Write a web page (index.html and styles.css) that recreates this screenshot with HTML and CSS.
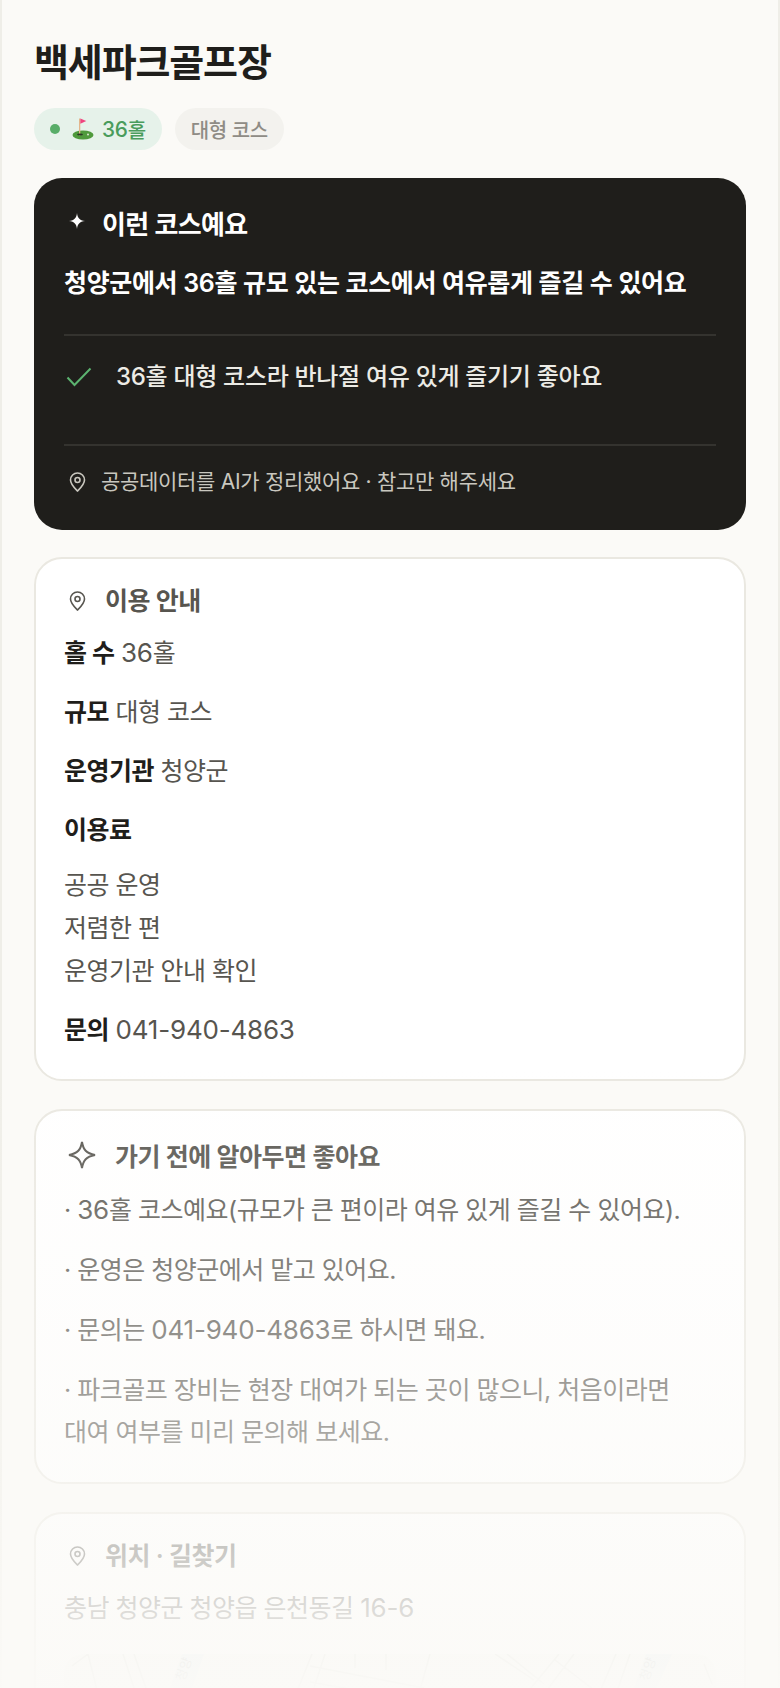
FILE: index.html
```html
<!DOCTYPE html>
<html lang="ko">
<head>
<meta charset="utf-8">
<title>백세파크골프장</title>
<link rel="stylesheet" href="styles.css">
</head>
<body>
<main class="page">
  <h1 class="title">백세파크골프장</h1>
  <div class="tags">
    <span class="tag tag-green"><i class="dot"></i><svg class="golf" viewBox="0 0 22 22"><ellipse cx="11" cy="17" rx="10.500" ry="4.500" fill="#4f9a3c"/><rect x="7" y="0.500" width="1.300" height="17" fill="#e3b68c"/><path d="M8.300 0.500l6 2.600-6 2.600z" fill="#f0447f"/><ellipse cx="8" cy="16.500" rx="3" ry="1" fill="#2b3a24"/><circle cx="16" cy="16.500" r="1" fill="#dfe8d6"/></svg><span class="num">36</span>홀</span>
    <span class="tag tag-gray">대형 코스</span>
  </div>
  <section class="hero">
    <h2 class="hero-head"><svg class="spark" viewBox="0 0 16 16"><path d="M8 0c.5 5 2.500 7.300 8 8-5.500.7-7.500 3-8 8-.5-5-2.500-7.300-8-8 5.500-.7 7.500-3 8-8z" fill="#fff"/></svg>이런 코스예요</h2>
    <p class="hero-lead">청양군에서 36홀 규모 있는 코스에서 여유롭게 즐길 수 있어요</p>
    <div class="hero-point"><svg class="check" viewBox="0 0 26 20"><path d="M1.500 10.500l7 7.500L24.500 1.500" fill="none" stroke="#5cb370" stroke-width="2"/></svg>36홀 대형 코스라 반나절 여유 있게 즐기기 좋아요</div>
    <p class="hero-note"><svg class="pin pin-light" viewBox="0 0 17 20"><path d="M8.500 1a7 7 0 0 0-7 7c0 4.300 3.700 7.800 7 11 3.300-3.200 7-6.700 7-11a7 7 0 0 0-7-7z"/><circle cx="8.500" cy="8" r="2.500"/></svg>공공데이터를 AI가 정리했어요 · 참고만 해주세요</p>
  </section>
  <section class="card card-info">
    <h3 class="card-head"><svg class="pin" viewBox="0 0 17 20"><path d="M8.500 1a7 7 0 0 0-7 7c0 4.300 3.700 7.800 7 11 3.300-3.200 7-6.700 7-11a7 7 0 0 0-7-7z"/><circle cx="8.500" cy="8" r="2.500"/></svg>이용 안내</h3>
    <p class="row"><b>홀 수</b> <span class="num">36</span>홀</p>
    <p class="row"><b>규모</b> 대형 코스</p>
    <p class="row"><b>운영기관</b> 청양군</p>
    <p class="row row-fee"><b>이용료</b></p>
    <p class="row row-lines">공공 운영<br>저렴한 편<br>운영기관 안내 확인</p>
    <p class="row"><b>문의</b> <span class="num">041-940-4863</span></p>
  </section>
  <section class="card card-tips">
    <h3 class="card-head"><svg class="star" viewBox="0 0 30 30"><path d="M15 2c1.300 7.800 4.200 11.300 13 13-8.800 1.700-11.700 5.200-13 13-1.300-7.800-4.200-11.300-13-13 8.800-1.700 11.700-5.200 13-13z"/></svg>가기 전에 알아두면 좋아요</h3>
    <p class="row">· <span class="num">36</span>홀 코스예요(규모가 큰 편이라 여유 있게 즐길 수 있어요).</p>
    <p class="row">· 운영은 청양군에서 맡고 있어요.</p>
    <p class="row">· 문의는 <span class="num">041-940-4863</span>로 하시면 돼요.</p>
    <p class="row">· 파크골프 장비는 현장 대여가 되는 곳이 많으니, 처음이라면 대여 여부를 미리 문의해 보세요.</p>
  </section>
  <section class="card card-info">
    <h3 class="card-head"><svg class="pin" viewBox="0 0 17 20"><path d="M8.500 1a7 7 0 0 0-7 7c0 4.300 3.700 7.800 7 11 3.300-3.200 7-6.700 7-11a7 7 0 0 0-7-7z"/><circle cx="8.500" cy="8" r="2.500"/></svg>위치 · 길찾기</h3>
    <p class="row">충남 청양군 청양읍 은천동길 <span class="num">16-6</span></p>
    <svg class="map" viewBox="0 0 652 200">
      <rect width="652" height="200" fill="#f7f7f4"/>
      <path class="road-river" d="M118 0L104 40H126L140 0z"/>
      <path class="road-river" d="M582 0L568 40H590L608 0z"/>
      <path class="road" d="M8 12L24 0M24 0L34 40M59 0L72 40M70 0L84 40M248 0L232 40M261 0L248 40M291 0V14M246 12L360 34M246 28L360 48M322 0V16M366 0L356 36M431 0L470 26M443 0L480 30M495 0L462 40M510 0L480 40M491 6L530 36M552 0L535 40M566 0L552 40M640 10L648 30"/>
      <text class="map-label" transform="translate(120 28) rotate(-70)">청양</text>
      <text class="map-label" transform="translate(584 28) rotate(-70)">청양</text>
    </svg>
  </section>
</main>
<div class="fade"></div>
</body>
</html>
```
FILE: styles.css
```css
* { box-sizing: border-box; }
html, body { margin: 0; padding: 0; height: 1688px; overflow: hidden; }
body {
  background: #fbfaf7;
  font-family: Inter, "Noto Sans CJK KR", sans-serif;
  color: #1f1e1b;
  position: relative;
  word-break: keep-all;
}
.page {
  border-left: 2px solid #efeee8;
  border-right: 2px solid #efeee8;
  padding: 35px 32px 0;
  height: 1688px;
  overflow: hidden;
}
.num { font-size: 1.04em; letter-spacing: -0.2px; }
.title { margin: 0; font-size: 38px; line-height: 54px; font-weight: 700; letter-spacing: -1.14px; }
.tags { display: flex; gap: 13px; margin-top: 19px; }
.tag {
  display: inline-flex; align-items: center; height: 42px; padding: 0 16px;
  border-radius: 21px; font-size: 20px; font-weight: 500; letter-spacing: -0.4px;
}
.tag-green { background: #e6f2ea; color: #4a9c5c; }
.tag-gray { background: #f3f2ee; color: #8f8c85; }
.dot { width: 10px; height: 10px; border-radius: 50%; background: #58ad68; margin-right: 12px; }
.golf { width: 22px; height: 22px; margin-right: 8px; }
.hero {
  margin-top: 28px; background: #1f1e1b; border-radius: 28px; padding: 31px 30px 33px;
  color: #fff;
}
.hero-head { margin: 0; display: flex; align-items: center; font-size: 26px; line-height: 32px; font-weight: 600; letter-spacing: -0.65px; }
.spark { width: 16px; height: 16px; margin: -8px 17px 0 5px; flex: none; }
.hero-lead { margin: 24px 0 0; font-size: 25px; line-height: 36px; font-weight: 600; letter-spacing: -0.35px; }
.hero-point {
  margin-top: 33px; border-top: 2px solid #34332f; padding-top: 23px; height: 110px;
  display: flex; align-items: flex-start; font-size: 24px; line-height: 36px; color: #ecebe5; font-weight: 500; letter-spacing: -0.3px;
}
.check { width: 26px; height: 20px; margin: 8px 24px 0 2px; flex: none; }
.hero-note {
  margin: 0; border-top: 2px solid #34332f; padding-top: 21px;
  display: flex; align-items: center; font-size: 21px; line-height: 30px; color: #c9c7bf; letter-spacing: -0.3px;
}
.pin { width: 17px; height: 20px; margin: 0 19px 0 5px; fill: none; stroke: currentColor; stroke-width: 1.600; flex: none; }
.pin-light { color: #c9c7bf; margin-right: 15px; }
.card {
  margin-top: 28px; background: #fff; border: 2px solid #eae8e1; border-radius: 28px; padding: 24px 28px 27px;
}
.hero + .card { margin-top: 27px; }
.card-head { margin: 0 0 13px; display: flex; align-items: center; font-size: 25px; line-height: 36px; font-weight: 600; color: #57554f; letter-spacing: -0.5px; }
.star { width: 30px; height: 30px; margin: -4px 18px 0 3px; fill: none; stroke: #57554f; stroke-width: 2; flex: none; }
.row { margin: 0 0 16.500px; font-size: 25px; line-height: 42.500px; color: #57554f; letter-spacing: -0.5px; }
.row:last-child { margin-bottom: 0; }
.row b { color: #1f1e1b; font-weight: 700; }
.row-fee { margin-bottom: 12px; }
.row-lines { line-height: 43px; }
.card-tips { padding-top: 28px; padding-bottom: 28px; }
.card-tips .card-head { margin-bottom: 14px; }
.card-tips .row { margin-bottom: 17.500px; }
.card-tips .row:last-child { margin-bottom: 0; }
.map { display: block; margin-top: 25px; width: 100%; height: 200px; border-radius: 20px; }
.road { fill: none; stroke: #d0d3cb; stroke-width: 1.500; }
.road-river { fill: #dfeaf0; }
.map-label { font-size: 13px; fill: #a0a8a8; }
.fade {
  position: absolute; left: 0; right: 0; bottom: 0; height: 620px; pointer-events: none;
  background: linear-gradient(to bottom, rgba(251,250,247,0), rgba(251,250,247,0.55) 65%, rgba(251,250,247,0.96) 100%);
}
```
